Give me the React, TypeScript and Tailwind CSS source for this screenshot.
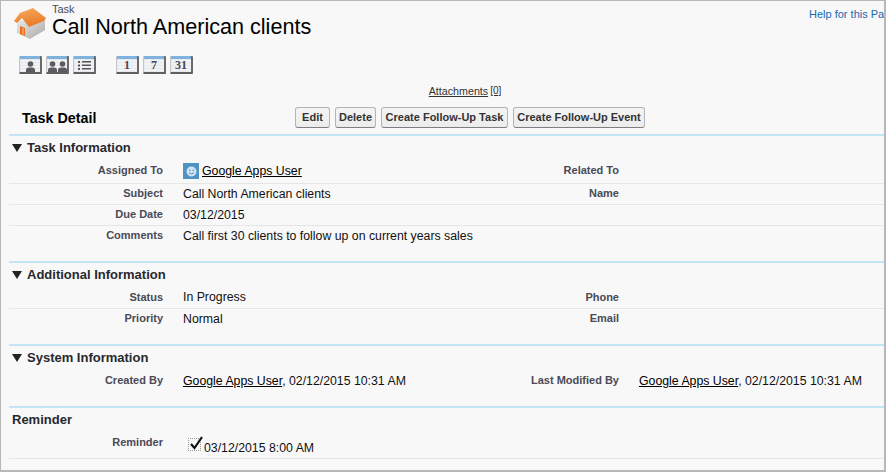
import React from 'react';

const font = { fontFamily: '"Liberation Sans", Arial, sans-serif' };

const IconButton: React.FC<{ children: React.ReactNode }> = ({ children }) => (
  <div className="w-[23px] h-[18px] rounded-[1px] border-l border-r-2 border-b-2 border-l-[#c4c4c4] border-r-[#6a6a6a] border-b-[#5f5f5f] bg-[#f3f3f3] overflow-hidden flex flex-col">
    <div className="h-[3px] bg-[#7fb2de] shrink-0" />
    <div className="flex-1 flex items-end justify-center bg-[linear-gradient(#e3e9ee_1px,transparent_1px),linear-gradient(90deg,#e9edf0_1px,transparent_1px)] bg-[length:7px_3px]">
      {children}
    </div>
  </div>
);

const Person = ({ x = 0 }: { x?: number }) => (
  <g transform={`translate(${x} 0)`} fill="#5c5c5e">
    <circle cx="4.5" cy="3" r="2.8" />
    <path d="M0 11 V9 Q0 6.5 3 6.5 H6 Q9 6.5 9 9 V11 Z" />
  </g>
);

const DayButton: React.FC<{ n: string }> = ({ n }) => (
  <IconButton>
    <span className="text-[12px] font-bold leading-[13px] text-[#4a4450]" style={{ fontFamily: '"Liberation Serif", serif' }}>
      {n}
    </span>
  </IconButton>
);

const HouseIcon = () => (
  <svg width="33" height="32" viewBox="0 0 33 32" className="shrink-0">
    <defs>
      <linearGradient id="wall" x1="0" y1="0" x2="1" y2="1">
        <stop offset="0" stopColor="#ececec" />
        <stop offset="1" stopColor="#a9a9a9" />
      </linearGradient>
      <linearGradient id="roof" x1="0.2" y1="0" x2="0.5" y2="1">
        <stop offset="0" stopColor="#f6a860" />
        <stop offset="1" stopColor="#e87a22" />
      </linearGradient>
    </defs>
    <path d="M3 13 V25 L16 31 L31 22 V10 Z" fill="url(#wall)" />
    <path d="M6 18 L11 20 V28 L6 26 Z" fill="#e8701f" />
    <path d="M8 19.5 L10 20.4 V27 L8 26 Z" fill="#f59a4c" />
    <path d="M0 13 L6 5 L19 0 L32 10 L30 13 L15 19 L8 10 L3 15 Z" fill="url(#roof)" />
  </svg>
);

const Btn: React.FC<{ w: string; children: React.ReactNode }> = ({ w, children }) => (
  <button className={`${w} h-[21px] rounded-[3px] border border-[#b5b5b5] border-b-[#7f7f7f] bg-[linear-gradient(#f4f4f4,#ececec)] text-[11px] font-bold text-[#333] leading-none`}>
    {children}
  </button>
);

const Row: React.FC<{
  label?: string;
  value?: React.ReactNode;
  label2?: string;
  value2?: React.ReactNode;
  h: string;
  line?: boolean;
  pt?: string;
  vpt?: string;
}> = ({ label, value, label2, value2, h, line = true, pt = 'pt-[3px]', vpt = 'pt-[3px]' }) => (
  <div className={`${h} ml-[8px] flex ${line ? 'border-b border-[#e6e6e6]' : ''}`}>
    <div className={`w-[154px] text-right text-[11px] font-bold leading-[13px] text-[#4a4a56] ${pt}`}>{label}</div>
    <div className="w-[20px]" />
    <div className={`w-[283px] text-[12.3px] leading-[14px] text-[#111] whitespace-nowrap ${vpt}`}>{value}</div>
    <div className={`w-[153px] text-right text-[11px] font-bold leading-[13px] text-[#4a4a56] ${pt}`}>{label2}</div>
    <div className="w-[20px]" />
    <div className={`flex-1 text-[12.3px] leading-[14px] text-[#111] whitespace-nowrap ${vpt}`}>{value2}</div>
  </div>
);

const SectionHead: React.FC<{ title: string; arrow?: boolean }> = ({ title, arrow = true }) => (
  <div className="h-[25px] border-t-2 border-[#c3e5f4] ml-[8px] flex items-center gap-[5px] pl-[3px]">
    {arrow ? (
      <svg width="10" height="8" viewBox="0 0 10 8">
        <path d="M0 0 H10 L5 8 Z" fill="#222" />
      </svg>
    ) : null}
    <span className="text-[13px] font-bold text-[#27282e]">{title}</span>
  </div>
);

const UserLink = () => <span className="underline text-black">Google Apps User</span>;

export default function App() {
  return (
    <div className="w-[886px] h-[472px] bg-[#f8f8f8] border-t border-l border-r-2 border-b-2 border-[#b8b8b8] overflow-hidden" style={font}>
      <div className="h-[50px] flex pl-[13px] pt-[7px] relative">
        <HouseIcon />
        <div className="ml-[5px] -mt-[4px]">
          <div className="text-[11px] leading-[11px] text-[#4a4a56]">Task</div>
          <div className="text-[21.6px] leading-[23px] text-black">Call North American clients</div>
        </div>
        <a className="absolute left-[808px] top-[7px] w-[75px] overflow-hidden whitespace-nowrap text-[11px] leading-[13px] text-[#1468b0]">
          Help for this Page
        </a>
      </div>

      <div className="h-[30px] pl-[18px] pt-[5px] flex">
        <div className="flex gap-[4px]">
          <IconButton>
            <svg width="9" height="11" viewBox="0 0 9 11"><Person /></svg>
          </IconButton>
          <IconButton>
            <svg width="19" height="11" viewBox="0 0 19 11"><Person /><Person x={10} /></svg>
          </IconButton>
          <IconButton>
            <svg width="13" height="9" viewBox="0 0 13 9" fill="#555" className="mb-[2px]">
              <rect x="0" y="0" width="2" height="2" /><rect x="4" y="0" width="9" height="1.5" />
              <rect x="0" y="3.5" width="2" height="2" /><rect x="4" y="3.5" width="9" height="1.5" />
              <rect x="0" y="7" width="2" height="2" /><rect x="4" y="7" width="9" height="1.5" />
            </svg>
          </IconButton>
        </div>
        <div className="flex gap-[4px] ml-[20px]">
          <DayButton n="1" />
          <DayButton n="7" />
          <DayButton n="31" />
        </div>
      </div>

      <div className="h-[24px] flex items-start justify-center pl-[45px] pt-[4px] text-[#333]">
        <span className="underline text-[10.7px] leading-[12px]">Attachments</span>
        <span className="underline ml-[2px] text-[10px] leading-[12px]">[0]</span>
      </div>

      <div className="h-[29px] flex items-start pt-[2px]">
        <div className="w-[294px] pl-[21px] pt-[1px] text-[14.3px] font-bold text-black">Task Detail</div>
        <div className="flex gap-[5px]">
          <Btn w="w-[35px]">Edit</Btn>
          <Btn w="w-[41px]">Delete</Btn>
          <Btn w="w-[127px]">Create Follow-Up Task</Btn>
          <Btn w="w-[132px]">Create Follow-Up Event</Btn>
        </div>
      </div>

      <SectionHead title="Task Information" />
      <Row h="h-[25px]" pt="pt-[5px]" label="Assigned To" label2="Related To" value={
        <span className="flex items-center gap-[3px] mt-[1px]">
          <span className="w-[16px] h-[16px] bg-[#4f93c5] flex items-center justify-center">
            <svg width="11" height="11" viewBox="0 0 11 11">
              <circle cx="5.5" cy="5.5" r="5" fill="#cfe3f1" />
              <circle cx="3.8" cy="4.3" r="0.8" fill="#4f93c5" />
              <circle cx="7.2" cy="4.3" r="0.8" fill="#4f93c5" />
              <path d="M3 6.8 Q5.5 9 8 6.8" stroke="#4f93c5" fill="none" />
            </svg>
          </span>
          <UserLink />
        </span>
      } />
      <Row h="h-[21px]" label="Subject" label2="Name" value="Call North American clients" />
      <Row h="h-[21px]" label="Due Date" value="03/12/2015" />
      <Row h="h-[35px]" line={false} label="Comments" value="Call first 30 clients to follow up on current years sales" />

      <SectionHead title="Additional Information" />
      <Row h="h-[23px]" pt="pt-[5px]" vpt="pt-[4px]" label="Status" label2="Phone" value="In Progress" />
      <Row h="h-[35px]" line={false} label="Priority" label2="Email" value="Normal" />

      <SectionHead title="System Information" />
      <Row h="h-[37px]" line={false} pt="pt-[5px]" vpt="pt-[5px]" label="Created By" label2="Last Modified By"
        value={<><UserLink />, 02/12/2015 10:31 AM</>}
        value2={<><UserLink />, 02/12/2015 10:31 AM</>}
      />

      <SectionHead title="Reminder" arrow={false} />
      <Row h="h-[28px]" pt="pt-[5px]" vpt="pt-0" label="Reminder" value={
        <span className="flex items-start gap-[3px] pl-[5px]">
          <span className="w-[13px] h-[13px] mt-[7px] border border-dotted border-[#999] relative">
            <svg width="14" height="14" viewBox="0 0 14 14" className="absolute -top-[3px] left-[1px]">
              <path d="M1 8 L4.5 12 L12 1" stroke="#111" strokeWidth="2.2" fill="none" />
            </svg>
          </span>
          <span className="mt-[10px]">03/12/2015 8:00 AM</span>
        </span>
      } />
    </div>
  );
}
